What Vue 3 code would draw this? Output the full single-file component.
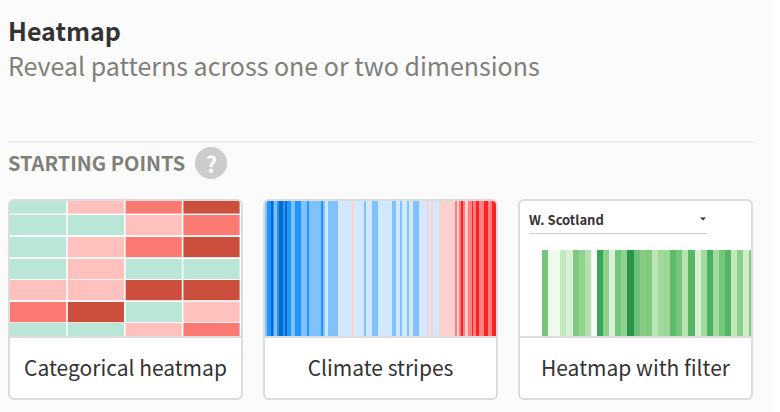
<script setup>
const swatches = { g: '#b9e6d6', p: '#ffc1be', c: '#fb7a73', r: '#cc4f3d' }
const heatRows = ['gpcr', 'ggpc', 'gpcr', 'gpgg', 'pprr', 'crgp', 'ggpc']
const cells = heatRows.flatMap((row, r) =>
  [...row].map((key, c) => ({
    x: c * 57.8,
    y: r === 0 ? 0 : Math.round(r * 21.6 - 7.2),
    w: 56.2,
    h: r === 0 ? 12.6 : 20.2,
    fill: swatches[key],
  }))
)

const tones = {
  n: '#0b67c4', b: '#2196ff', l: '#80c2ff', s: '#d1e8ff',
  p: '#ffd0d0', m: '#ff8080', r: '#ff2121',
}

// Runs of [tone, width] laid side by side from the left edge.
const climateRuns = [
  ['l', 2], ['b', 4], ['n', 2], ['b', 1], ['l', 3], ['b', 2], ['n', 4], ['b', 2],
  ['n', 2], ['b', 4], ['l', 4], ['b', 6], ['l', 6], ['b', 2], ['l', 12], ['b', 2],
  ['l', 2], ['s', 3], ['l', 10], ['s', 14], ['p', 2], ['s', 10], ['l', 2], ['s', 6],
  ['l', 6], ['s', 14], ['l', 4], ['s', 4], ['l', 2], ['s', 5], ['l', 2], ['s', 4],
  ['l', 6], ['s', 8], ['p', 2], ['s', 2], ['p', 2], ['s', 6], ['p', 16], ['m', 2],
  ['p', 2], ['m', 2], ['r', 2], ['m', 2], ['p', 3], ['m', 4], ['r', 1], ['m', 3],
  ['r', 3], ['m', 5], ['r', 4], ['m', 4], ['r', 4],
]

function layRuns(runs, start) {
  let x = start
  return runs.map(([tone, w]) => {
    const bar = { x, w, fill: tones[tone] }
    x += w
    return bar
  })
}
const climate = layRuns(climateRuns, 0)

const greens = [
  '#74c67a', '#eff9ec', '#eff9ec', '#c4e8be', '#daf0d6', '#80ca80', '#92d290',
  '#b3e0ad', '#f6fcf5', '#3ba458', '#8bd08a', '#daf0d6', '#74c67a', '#92d290',
  '#29944c', '#6cc177', '#86cc84', '#80ca80', '#bce4b5', '#a2d99c', '#9dd798',
  '#5dba6e', '#74c67a', '#b9e3b2', '#56b567', '#d5efd0', '#a2d99c', '#4cb063',
  '#a2d99c', '#74c67a', '#54b567', '#c4e8be', '#8bd08a', '#d0edca', '#80ca80',
]
const greenBars = greens.map((fill, i) => ({ x: 22 + i * 6.1, w: 6.1, fill }))
</script>

<template>
  <main class="page">
    <header class="intro">
      <h1>Heatmap</h1>
      <p>Reveal patterns across one or two dimensions</p>
    </header>
    <section class="starting">
      <div class="heading">
        <h2>STARTING POINTS</h2>
        <button class="help" type="button" aria-label="Help">?</button>
      </div>
      <div class="cards">
        <a class="card" href="#categorical">
          <div class="preview">
            <svg viewBox="0 0 231 135" preserveAspectRatio="none" aria-hidden="true">
              <rect v-for="(c, i) in cells" :key="i" :x="c.x" :y="c.y" :width="c.w" :height="c.h" :fill="c.fill" />
            </svg>
          </div>
          <span class="name">Categorical heatmap</span>
        </a>
        <a class="card" href="#climate">
          <div class="preview">
            <svg viewBox="0 0 231 135" preserveAspectRatio="none" shape-rendering="crispEdges" aria-hidden="true">
              <rect v-for="(b, i) in climate" :key="i" :x="b.x" y="0" :width="b.w" height="135" :fill="b.fill" />
            </svg>
          </div>
          <span class="name">Climate stripes</span>
        </a>
        <a class="card" href="#filter">
          <div class="preview filter">
            <div class="dropdown">
              <span>W. Scotland</span>
              <svg class="caret" viewBox="0 0 6 4" aria-hidden="true"><path d="M0 0.5H6L3 3.5Z" fill="#333" /></svg>
            </div>
            <svg class="bars" viewBox="0 0 231 86" preserveAspectRatio="none" shape-rendering="crispEdges" aria-hidden="true">
              <rect v-for="(b, i) in greenBars" :key="i" :x="b.x" y="0" :width="b.w" height="86" :fill="b.fill" />
            </svg>
          </div>
          <span class="name">Heatmap with filter</span>
        </a>
      </div>
    </section>
  </main>
</template>

<style>
body {
  margin: 0;
  background: #fbfbfb;
}
</style>

<style scoped>
.page {
  box-sizing: border-box;
  min-height: 100vh;
  padding: 14px 20px 12px 8px;
  border-right: 7px solid #fff;
  font-family: "Noto Sans CJK SC", "Noto Sans", sans-serif;
  color: #333;
}
h1,
h2,
p {
  margin: 0;
}
h1 {
  font-size: 25px;
  line-height: 32px;
  font-weight: 700;
}
.intro p {
  font-size: 25px;
  line-height: 38px;
  color: #807f78;
}
.starting {
  margin-top: 57px;
  border-top: 2px solid #eee;
}
.heading {
  display: flex;
  align-items: center;
  gap: 10px;
  padding-top: 4px;
}
h2 {
  font-size: 20px;
  line-height: 32px;
  color: #807f78;
}
.help {
  width: 32px;
  height: 32px;
  padding: 0;
  border: 0;
  border-radius: 50%;
  background: #ccc;
  color: #fff;
  font: 700 22px/32px "Noto Sans CJK SC", "Noto Sans", sans-serif;
}
.cards {
  display: grid;
  grid-template-columns: repeat(3, 1fr);
  gap: 20px;
  margin-top: 20px;
}
.card {
  overflow: hidden;
  border: 2px solid #dcdcdc;
  border-radius: 6px;
  background: #fff;
  color: #333;
  text-decoration: none;
}
.preview {
  aspect-ratio: 231 / 135;
  border-bottom: 2px solid #dcdcdc;
}
.preview > svg {
  display: block;
  width: 100%;
  height: 100%;
}
.filter {
  display: flex;
  flex-direction: column;
}
.dropdown {
  display: flex;
  align-items: center;
  justify-content: space-between;
  margin: 4px 44px 0 9px;
  height: 28px;
  border-bottom: 1px solid #ccc;
  font-size: 13px;
  font-weight: 700;
}
.caret {
  width: 6px;
  height: 4px;
  margin-right: 1px;
}
.preview > .bars {
  flex: 1;
  min-height: 0;
  margin-top: 16px;
}
.name {
  display: block;
  padding-bottom: 2px;
  font-size: 21px;
  line-height: 58px;
  text-align: center;
  white-space: nowrap;
}
</style>
